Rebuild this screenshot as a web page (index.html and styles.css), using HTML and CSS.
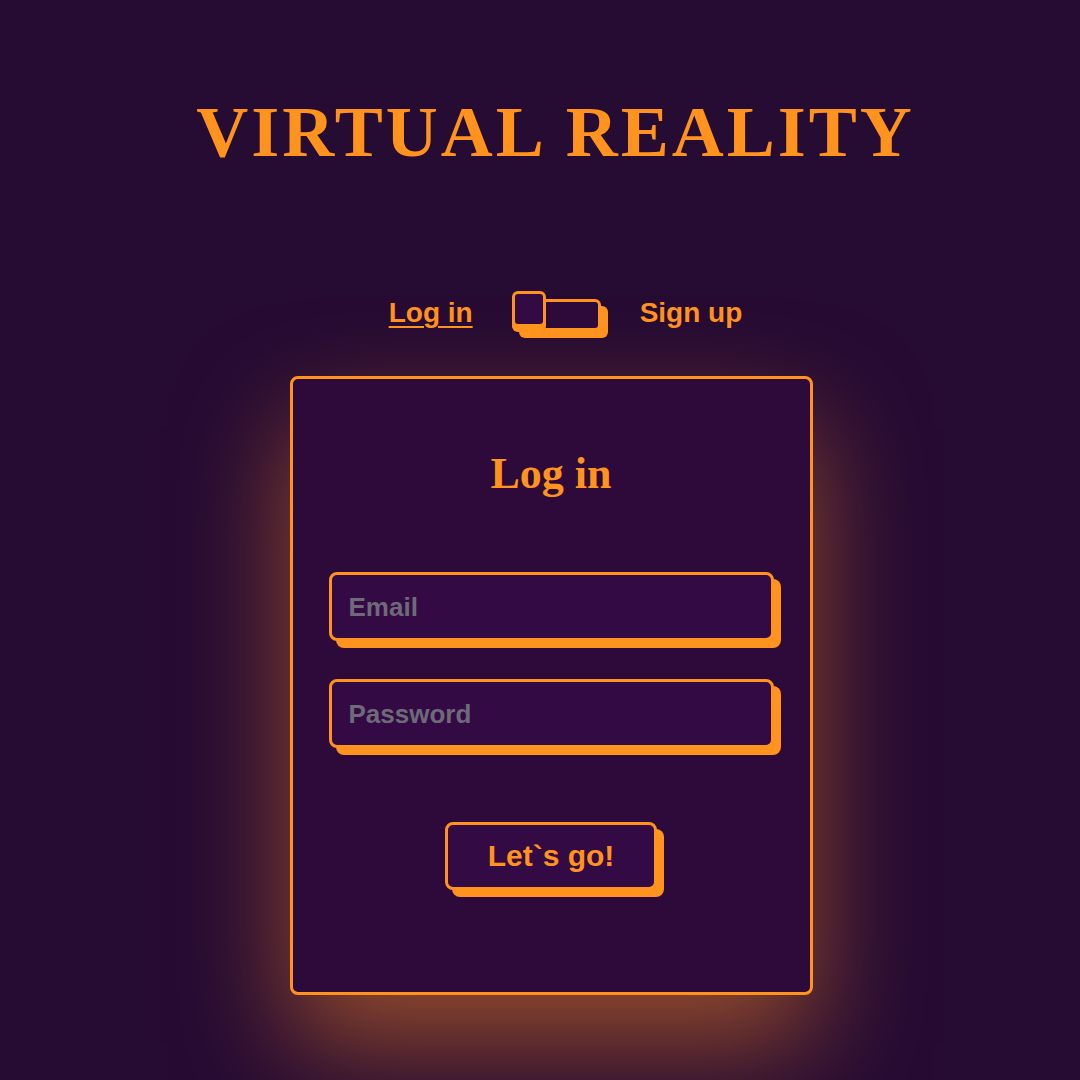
FILE: index.html
```html
<!DOCTYPE html>
<html lang="en">
<head>
<meta charset="utf-8">
<title>Virtual Reality</title>
<link rel="stylesheet" href="styles.css">
</head>
<body>
  <main class="page">
    <h1 class="brand">VIRTUAL REALITY</h1>
    <div class="switch-row">
      <span class="switch-label switch-label--active">Log in</span>
      <span class="slider"><span class="knob"></span></span>
      <span class="switch-label">Sign up</span>
    </div>
    <form class="card">
      <h2 class="card-title">Log in</h2>
      <input class="field" type="email" placeholder="Email">
      <input class="field field--second" type="password" placeholder="Password">
      <button class="btn" type="button">Let`s go!</button>
    </form>
  </main>
</body>
</html>
```
FILE: styles.css
```css
html, body {
  margin: 0;
  padding: 0;
  height: 100%;
}
body {
  background: #260b33;
  overflow: hidden;
}
.page {
  display: flex;
  flex-direction: column;
  align-items: center;
  padding-top: 96px;
}
.brand {
  margin: 0 0 0 31px;
  font-family: "Liberation Serif", "Times New Roman", serif;
  font-weight: 700;
  font-size: 72px;
  line-height: 1;
  letter-spacing: 3px;
  word-spacing: 2px;
  color: #ff931e;
}
.switch-row {
  display: flex;
  align-items: flex-start;
  margin-top: 131px;
  margin-left: 51px;
  font-family: "Liberation Sans", Arial, sans-serif;
  font-weight: 700;
  font-size: 28px;
  line-height: 1;
  color: #ff931e;
}
.switch-label {
  display: block;
}
.switch-label--active {
  text-decoration: underline;
  text-decoration-thickness: 2px;
  text-underline-offset: 4px;
}
.slider {
  position: relative;
  display: block;
  box-sizing: border-box;
  width: 89px;
  height: 32px;
  margin: 0 39px;
  border: 3px solid #ff931e;
  border-radius: 6px;
  background: #2e0a3a;
  box-shadow: 7px 7px 0 #ff931e;
}
.knob {
  position: absolute;
  left: -3px;
  top: -11px;
  box-sizing: border-box;
  width: 34px;
  height: 36px;
  border: 3px solid #ff931e;
  border-radius: 6px;
  background: #340a42;
  box-shadow: 0 5px 0 #ff931e;
}
.card {
  box-sizing: border-box;
  width: 523px;
  height: 619px;
  margin: 45px 0 0 22px;
  padding-top: 73px;
  display: flex;
  flex-direction: column;
  align-items: center;
  background: #2e0a3a;
  border: 3px solid #ff931e;
  border-radius: 8px;
  box-shadow: 0 50px 110px rgba(255, 140, 35, 0.5);
}
.card-title {
  margin: 0 0 76px 0;
  font-family: "Liberation Serif", "Times New Roman", serif;
  font-weight: 700;
  font-size: 44px;
  line-height: 1;
  color: #ff931e;
}
.field {
  box-sizing: border-box;
  width: 445px;
  height: 69px;
  margin: 0;
  padding: 2px 17px 0;
  border: 3px solid #ff931e;
  border-radius: 8px;
  background: #330a44;
  box-shadow: 7px 7px 0 #ff931e;
  font-family: "Liberation Sans", Arial, sans-serif;
  font-weight: 700;
  font-size: 26px;
  color: #ff931e;
  outline: none;
}
.field::placeholder {
  color: #6e6a7a;
  opacity: 1;
}
.field--second {
  margin-top: 38px;
}
.btn {
  box-sizing: border-box;
  width: 212px;
  height: 68px;
  margin-top: 74px;
  padding: 0;
  border: 3px solid #ff931e;
  border-radius: 8px;
  background: #330a44;
  box-shadow: 7px 7px 0 #ff931e;
  font-family: "Liberation Sans", Arial, sans-serif;
  font-weight: 700;
  font-size: 30px;
  color: #ff931e;
  cursor: pointer;
}
```
